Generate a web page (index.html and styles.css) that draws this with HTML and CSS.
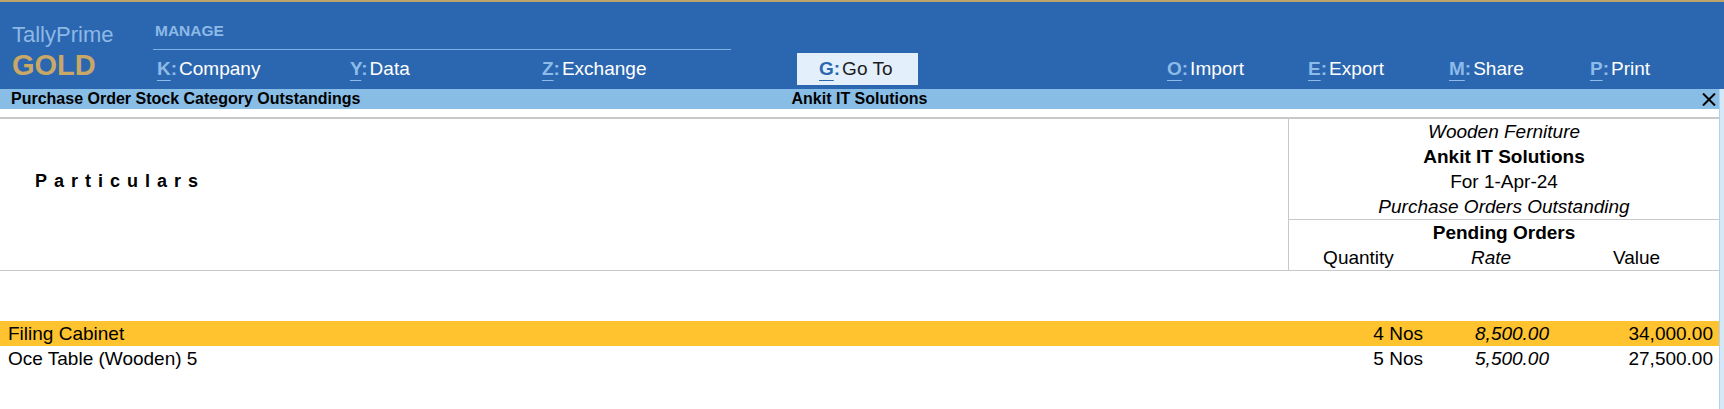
FILE: index.html
```html
<!DOCTYPE html>
<html lang="en">
<head>
  <meta charset="UTF-8">
  <title>Purchase Order Stock Category Outstandings</title>
  <link rel="stylesheet" href="styles.css">
</head>
<body>
  <div class="topline"></div>
  <header class="topbar">
    <div class="brand">
      <div class="brand-name">TallyPrime</div>
      <div class="brand-edition">GOLD</div>
    </div>
    <div class="manage">
      <div class="manage-title">MANAGE</div>
      <div class="menu">
        <span class="menu-item w1"><span class="key">K</span><span class="colon">:</span>Company</span>
        <span class="menu-item w2"><span class="key">Y</span><span class="colon">:</span>Data</span>
        <span class="menu-item"><span class="key">Z</span><span class="colon">:</span>Exchange</span>
      </div>
    </div>
    <div class="goto">
      <span class="key">G</span><span class="colon">:</span>Go To
    </div>
    <div class="menu menu-right">
      <span class="menu-item"><span class="key">O</span><span class="colon">:</span>Import</span>
      <span class="menu-item"><span class="key">E</span><span class="colon">:</span>Export</span>
      <span class="menu-item"><span class="key">M</span><span class="colon">:</span>Share</span>
      <span class="menu-item last"><span class="key">P</span><span class="colon">:</span>Print</span>
    </div>
  </header>

  <div class="workspace">
    <div class="report">
      <div class="titlebar">
        <div class="title-left">Purchase Order Stock Category Outstandings</div>
        <div class="title-center">Ankit IT Solutions</div>
        <div class="title-right">
          <svg class="close" width="14" height="13" viewBox="0 0 14 13">
            <path d="M1 0.5 L13 12.5 M13 0.5 L1 12.5" stroke="#000" stroke-width="2" fill="none"/>
          </svg>
        </div>
      </div>

      <div class="report-head">
        <div class="particulars">Particulars</div>
        <div class="head-right">
          <div class="head-info">
            <div class="italic">Wooden Ferniture</div>
            <div class="bold">Ankit IT Solutions</div>
            <div>For 1-Apr-24</div>
            <div class="italic">Purchase Orders Outstanding</div>
          </div>
          <div class="head-cols">
            <div class="bold span3">Pending Orders</div>
            <div>Quantity</div>
            <div class="italic">Rate</div>
            <div>Value</div>
          </div>
        </div>
      </div>

      <div class="rows">
        <div class="row selected">
          <div class="name">Filing Cabinet</div>
          <div class="num qty">4 Nos</div>
          <div class="num rate">8,500.00</div>
          <div class="num value">34,000.00</div>
        </div>
        <div class="row">
          <div class="name">Oce Table (Wooden) 5</div>
          <div class="num qty">5 Nos</div>
          <div class="num rate">5,500.00</div>
          <div class="num value">27,500.00</div>
        </div>
      </div>
    </div>
    <div class="scroll"></div>
  </div>
</body>
</html>
```

FILE: styles.css
```css
body {
  margin: 0;
  font-family: 'Liberation Sans', Arial, sans-serif;
  background: #fff;
  color: #000;
  height: 409px;
  overflow: hidden;
  display: flex;
  flex-direction: column;
}
.topline {
  height: 2px;
  background: #bca46c;
}
.topbar {
  display: flex;
  align-items: flex-start;
  height: 67px;
  padding-top: 20px;
  background: #2b67b0;
  overflow: hidden;
}
.topbar > * {
  flex-shrink: 0;
}
.brand {
  width: 141px;
  padding-left: 12px;
}
.brand-name {
  font-size: 22px;
  line-height: 26px;
  color: #8db8e6;
}
.brand-edition {
  margin-top: 1px;
  font-size: 29px;
  line-height: 32px;
  font-weight: bold;
  color: #c9a766;
}
.manage {
  width: 578px;
}
.manage-title {
  padding: 0 0 9px 2px;
  font-size: 15.5px;
  line-height: 18px;
  font-weight: bold;
  color: #8db9e6;
  border-bottom: 1px solid #7fb1e3;
}
.menu {
  display: flex;
  margin-top: 7px;
  padding-left: 4px;
}
.menu-item {
  font-size: 19px;
  line-height: 24px;
  color: #fff;
  white-space: nowrap;
}
.menu-item.w1 {
  width: 193px;
}
.menu-item.w2 {
  width: 192px;
}
.key {
  font-weight: bold;
  color: #8dbbe9;
  text-decoration: underline;
  text-decoration-thickness: 1px;
  text-underline-offset: 5px;
}
.colon {
  font-weight: bold;
  color: #8dbbe9;
  margin-right: 2px;
}
.goto {
  margin: 31px 0 0 66px;
  width: 99px;
  padding: 4px 0 4px 22px;
  font-size: 19px;
  line-height: 24px;
  color: #1c1c1c;
  background: #e3effb;
}
.goto .key,
.goto .colon {
  color: #2b67b0;
}
.menu-right {
  margin: 35px 0 0 249px;
  padding-left: 0;
}
.menu-right .menu-item {
  width: 141px;
}
.menu-right .menu-item.last {
  width: auto;
}
.workspace {
  flex: 1;
  display: flex;
}
.report {
  flex: 1;
}
.scroll {
  width: 4px;
  background: #d4e8f8;
  border-left: 1px solid #b0d0ee;
}
.titlebar {
  display: grid;
  grid-template-columns: 1fr auto 1fr;
  align-items: center;
  height: 20px;
  background: #88bde6;
  font-size: 16px;
  font-weight: bold;
  line-height: 20px;
}
.title-left {
  padding-left: 11px;
}
.title-right {
  display: flex;
  justify-content: flex-end;
  padding-right: 3px;
}
.close {
  display: block;
}
.report-head {
  display: grid;
  grid-template-columns: 1fr 431px;
  margin-top: 8px;
  border-top: 2px solid #c8c8c8;
  border-bottom: 1px solid #c8c8c8;
  font-size: 19px;
  line-height: 25px;
}
.particulars {
  padding: 50px 0 0 35px;
  font-size: 18px;
  font-weight: bold;
  letter-spacing: 7px;
}
.head-right {
  border-left: 1px solid #c8c8c8;
  text-align: center;
}
.head-info {
  border-bottom: 1px solid #c8c8c8;
}
.head-cols {
  display: grid;
  grid-template-columns: 139px 126px 165px;
}
.span3 {
  grid-column: 1 / 4;
}
.italic {
  font-style: italic;
}
.bold {
  font-weight: bold;
}
.rows {
  margin-top: 50px;
  font-size: 19px;
  line-height: 25px;
}
.row {
  display: grid;
  grid-template-columns: 1fr 140px 126px 165px;
}
.row.selected {
  background: #fec32f;
}
.name {
  padding-left: 8px;
}
.num {
  text-align: right;
}
.qty {
  padding-right: 5px;
}
.rate {
  padding-right: 5px;
  font-style: italic;
}
.value {
  padding-right: 6px;
}
```
